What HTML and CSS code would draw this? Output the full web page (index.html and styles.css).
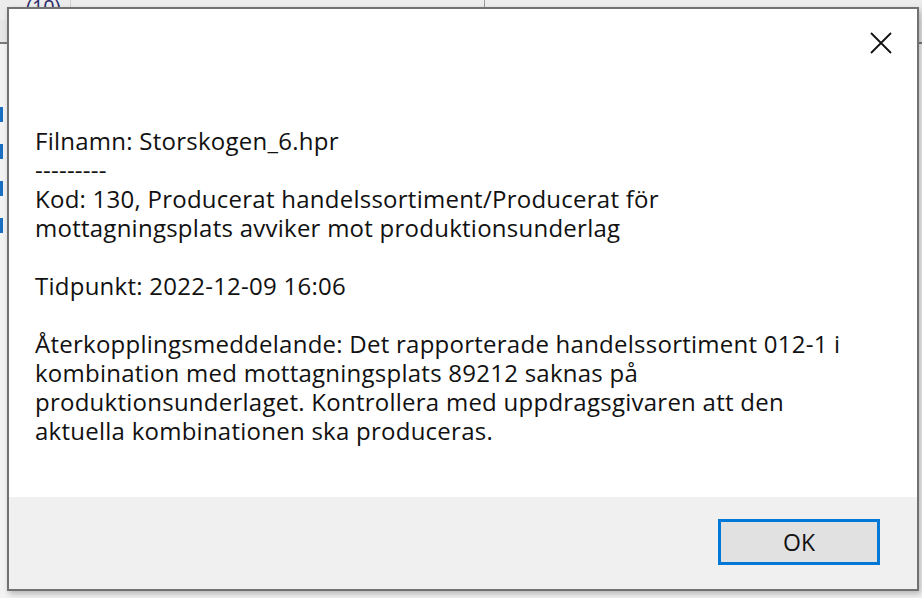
FILE: index.html
```html
<!DOCTYPE html>
<html lang="sv">
<head>
    <meta charset="UTF-8">
    <title>Meddelande</title>
    <link rel="stylesheet" href="styles.css">
</head>
<body>
    <!-- application behind the message box -->
    <div class="app">
        <div class="app-top">
            <div class="tab">(10)</div>
            <div class="tab-rest"></div>
        </div>
        <div class="app-main">
            <div class="side">
                <span class="chk"></span>
                <span class="chk"></span>
                <span class="chk"></span>
                <span class="chk"></span>
            </div>
        </div>
    </div>

    <div class="msgbox">
        <div class="msg-body">
            <div class="titlebar">
                <button class="close" aria-label="Stäng">
                    <svg width="24" height="24" viewBox="0 0 24 24">
                        <path d="M2 2 L22 22 M22 2 L2 22" stroke="#111" stroke-width="1.8" fill="none"/>
                    </svg>
                </button>
            </div>
            <div class="msg-text">
                <p>Filnamn: Storskogen_6.hpr</p>
                <p>---------</p>
                <p>Kod: 130, Producerat handelssortiment/Producerat för<br>mottagningsplats avviker mot produktionsunderlag</p>
                <p>&nbsp;</p>
                <p>Tidpunkt: 2022-12-09 16:06</p>
                <p>&nbsp;</p>
                <p>Återkopplingsmeddelande: Det rapporterade handelssortiment 012-1 i<br>kombination med mottagningsplats 89212 saknas på<br>produktionsunderlaget. Kontrollera med uppdragsgivaren att den<br>aktuella kombinationen ska produceras.</p>
            </div>
        </div>
        <div class="msg-footer">
            <button class="ok">OK</button>
        </div>
    </div>
</body>
</html>
```

FILE: styles.css
```css
body {
    margin: 0;
    width: 922px;
    height: 598px;
    overflow: hidden;
    background-color: #e6e6e6;
    font-family: "Open Sans", "Noto Sans", sans-serif;
    color: #000;
}

/* background app */
.app {
    height: 598px;
    display: flex;
    flex-direction: column;
}

.app-top {
    display: flex;
    height: 20px;
    background-color: #ececec;
}

.tab {
    width: 44px;
    padding-left: 26px;
    font-size: 20px;
    line-height: 14px;
    color: #2a2a6a;
    border-right: 1px solid #cfcfcf;
}

.tab-rest {
    width: 413px;
    border-right: 1px solid #9a9a9a;
}

.app-main {
    flex: 1;
    background-color: #f3f3f3;
    border-top: 2px solid #7a7a7a;
    margin-top: 22px;
}

.side {
    display: flex;
    flex-direction: column;
    gap: 22px;
    padding-top: 63px;
}

.chk {
    width: 3px;
    height: 15px;
    background-color: #1a6fc0;
}

/* message box */
.msgbox {
    position: absolute;
    left: 7px;
    top: 7px;
    width: 908px;
    height: 580px;
    border: 2px solid #717171;
    box-shadow: 2px 3px 6px rgba(0, 0, 0, 0.25);
    display: flex;
    flex-direction: column;
    background-color: #fff;
}

.msg-body {
    height: 488px;
    background-color: #fff;
}

.titlebar {
    display: flex;
    justify-content: flex-end;
    height: 112px;
    padding: 22px 24px 0 0;
    box-sizing: border-box;
}

.close {
    background: none;
    border: none;
    padding: 0;
    width: 24px;
    height: 24px;
}

.msg-text {
    padding: 5px 20px 0 26px;
    font-size: 24px;
    letter-spacing: 0.25px;
    line-height: 29px;
    white-space: nowrap;
    color: #111;
}

.msg-text p {
    margin: 0;
}

.msg-footer {
    flex: 1;
    background-color: #f0f0f0;
    display: flex;
    justify-content: flex-end;
    align-items: flex-start;
    padding: 22px 37px 0 0;
}

.ok {
    width: 162px;
    height: 46px;
    border: 3px solid #0078d7;
    background-color: #e1e1e1;
    font-family: "Open Sans", "Noto Sans", sans-serif;
    font-size: 23px;
    color: #111;
    padding: 0;
}
```
